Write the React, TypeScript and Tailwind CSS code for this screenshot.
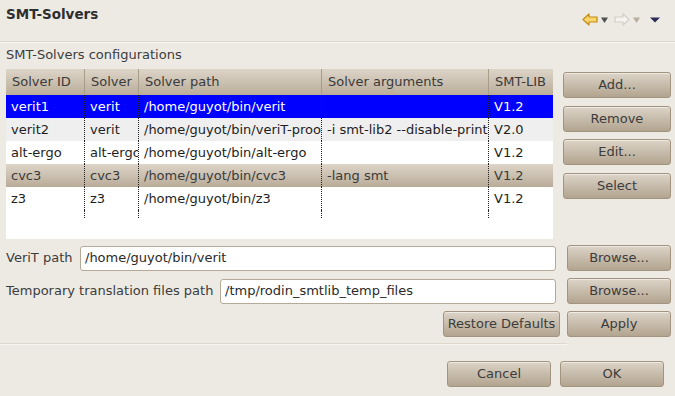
import React from "react";

const font = { fontFamily: '"DejaVu Sans", "Liberation Sans", sans-serif' };

function Btn({ children, className = "" }: { children: React.ReactNode; className?: string }) {
  return (
    <div
      className={
        "flex h-[26px] items-center justify-center rounded-[3px] border border-[#a2947f] bg-gradient-to-b from-[#dcd4c8] to-[#b2a48f] text-[13px] text-[#3c3c3c] shadow-[inset_0_1px_0_rgba(255,255,255,0.5)] " +
        className
      }
    >
      {children}
    </div>
  );
}

const cols = [79, 54, 183, 167, 64];
const headers = ["Solver ID", "Solver", "Solver path", "Solver arguments", "SMT-LIB"];
const rows: { cells: string[]; kind: "sel" | "gray" | "white" | "brown" }[] = [
  { cells: ["verit1", "verit", "/home/guyot/bin/verit", "", "V1.2"], kind: "sel" },
  { cells: ["verit2", "verit", "/home/guyot/bin/veriT-proof", "-i smt-lib2 --disable-print-success", "V2.0"], kind: "gray" },
  { cells: ["alt-ergo", "alt-ergo", "/home/guyot/bin/alt-ergo", "", "V1.2"], kind: "white" },
  { cells: ["cvc3", "cvc3", "/home/guyot/bin/cvc3", "-lang smt", "V1.2"], kind: "brown" },
  { cells: ["z3", "z3", "/home/guyot/bin/z3", "", "V1.2"], kind: "white" },
];

function rowBg(kind: string) {
  if (kind === "sel") return "bg-[#0000ff] text-white";
  if (kind === "gray") return "bg-[#efefef] text-[#1e1e1e]";
  if (kind === "brown") return "bg-gradient-to-b from-[#ddd5c9] to-[#b9ab98] text-[#3a3a3a]";
  return "bg-white text-[#1e1e1e]";
}

export default function App() {
  return (
    <div style={font} className="relative h-[396px] w-[675px] overflow-hidden bg-[#edeae4] text-[13px] text-[#3c3c3c]">
      {/* Title bar */}
      <div className="flex h-[41px] items-start justify-between px-[6px] pt-[4px]">
        <div className="text-[13.5px] font-bold text-[#2e2e2e]">SMT-Solvers</div>
        <div className="mt-[9px] mr-[9px] flex items-center">
          <svg width="16" height="13" viewBox="0 0 16 13">
            <path d="M1 6.5 L7 1 L7 4 L15 4 L15 9 L7 9 L7 12 Z" fill="#f8d66e" stroke="#c48a10" strokeWidth="1.2" strokeLinejoin="round" />
          </svg>
          <svg width="7" height="6" viewBox="0 0 7 6" className="ml-[3px]">
            <path d="M0 0.5 L7 0.5 L3.5 6 Z" fill="#505050" />
          </svg>
          <svg width="16" height="13" viewBox="0 0 16 13" className="ml-[6px]">
            <path d="M15 6.5 L9 1 L9 4 L1 4 L1 9 L9 9 L9 12 Z" fill="#f5f3ef" stroke="#d3cfc7" strokeWidth="1.2" strokeLinejoin="round" />
          </svg>
          <svg width="7" height="6" viewBox="0 0 7 6" className="ml-[3px]">
            <path d="M0 0.5 L7 0.5 L3.5 6 Z" fill="#b8b09f" />
          </svg>
          <svg width="10" height="6" viewBox="0 0 10 6" className="ml-[10px]">
            <path d="M0 0.5 L10 0.5 L5 5.5 Z" fill="#2d2a55" />
          </svg>
        </div>
      </div>
      <div className="h-[2px] border-t border-[#ddd8cf] bg-[#f7f5f1]" />

      <div className="px-[6px] pt-[5px] leading-none">SMT-Solvers configurations</div>

      {/* Table + buttons */}
      <div className="mt-[8px] flex pl-[6px]">
        <div className="h-[170px] w-[547px] overflow-hidden bg-white">
          <div className="flex h-[26px] bg-gradient-to-b from-[#ddd5c9] to-[#baad9a] text-[#3a3a3a]">
            {headers.map((h, i) => (
              <div
                key={h}
                style={{ width: cols[i] }}
                className={"flex items-center overflow-hidden whitespace-nowrap pl-[6px] " + (i < 4 ? "border-r border-[#a89c8a]" : "")}
              >
                {h}
              </div>
            ))}
          </div>
          {rows.map((r, ri) => (
            <div key={ri} className={"flex h-[23px] " + rowBg(r.kind)}>
              {r.cells.map((c, i) => (
                <div
                  key={i}
                  style={{ width: cols[i] }}
                  className={
                    "flex items-center overflow-hidden whitespace-nowrap pl-[5px] " +
                    (i < 4 ? "border-r border-dotted border-[#222]" : "")
                  }
                >
                  {c}
                </div>
              ))}
            </div>
          ))}
          <div className="flex h-[10px]">
            {cols.map((w, i) => (
              <div key={i} style={{ width: w }} className={i < 4 ? "h-[8px] border-r border-dotted border-[#222]" : ""} />
            ))}
          </div>
        </div>
        <div className="ml-[10px] mt-[3px] flex w-[108px] flex-col gap-[7.5px]">
          <Btn>Add...</Btn>
          <Btn>Remove</Btn>
          <Btn>Edit...</Btn>
          <Btn>Select</Btn>
        </div>
      </div>

      {/* Path rows */}
      <div className="mt-[6px] flex items-center pl-[6px]">
        <div className="w-[74px]">VeriT path</div>
        <div className="flex h-[25px] w-[476px] items-center rounded-[3px] border border-[#b5aa98] bg-white pl-[4px] text-[#2a2a2a]">
          /home/guyot/bin/verit
        </div>
        <Btn className="ml-[11px] w-[104px]">Browse...</Btn>
      </div>
      <div className="mt-[7px] flex items-center pl-[6px]">
        <div className="w-[214px] whitespace-nowrap">Temporary translation files path</div>
        <div className="flex h-[25px] w-[336px] items-center rounded-[3px] border border-[#b5aa98] bg-white pl-[4px] text-[#2a2a2a]">
          /tmp/rodin_smtlib_temp_files
        </div>
        <Btn className="ml-[11px] w-[104px]">Browse...</Btn>
      </div>
      <div className="mt-[7px] flex justify-end pr-[4px]">
        <Btn className="w-[117px]">Restore Defaults</Btn>
        <Btn className="ml-[7px] w-[104px]">Apply</Btn>
      </div>
      <div className="mt-[6px] h-[2px] w-[567px] border-t border-[#ddd8cf] bg-[#f7f5f1]" />

      <div className="mt-[16px] flex justify-end pr-[11px]">
        <Btn className="w-[104px]">Cancel</Btn>
        <Btn className="ml-[9px] w-[104px]">OK</Btn>
      </div>
    </div>
  );
}
